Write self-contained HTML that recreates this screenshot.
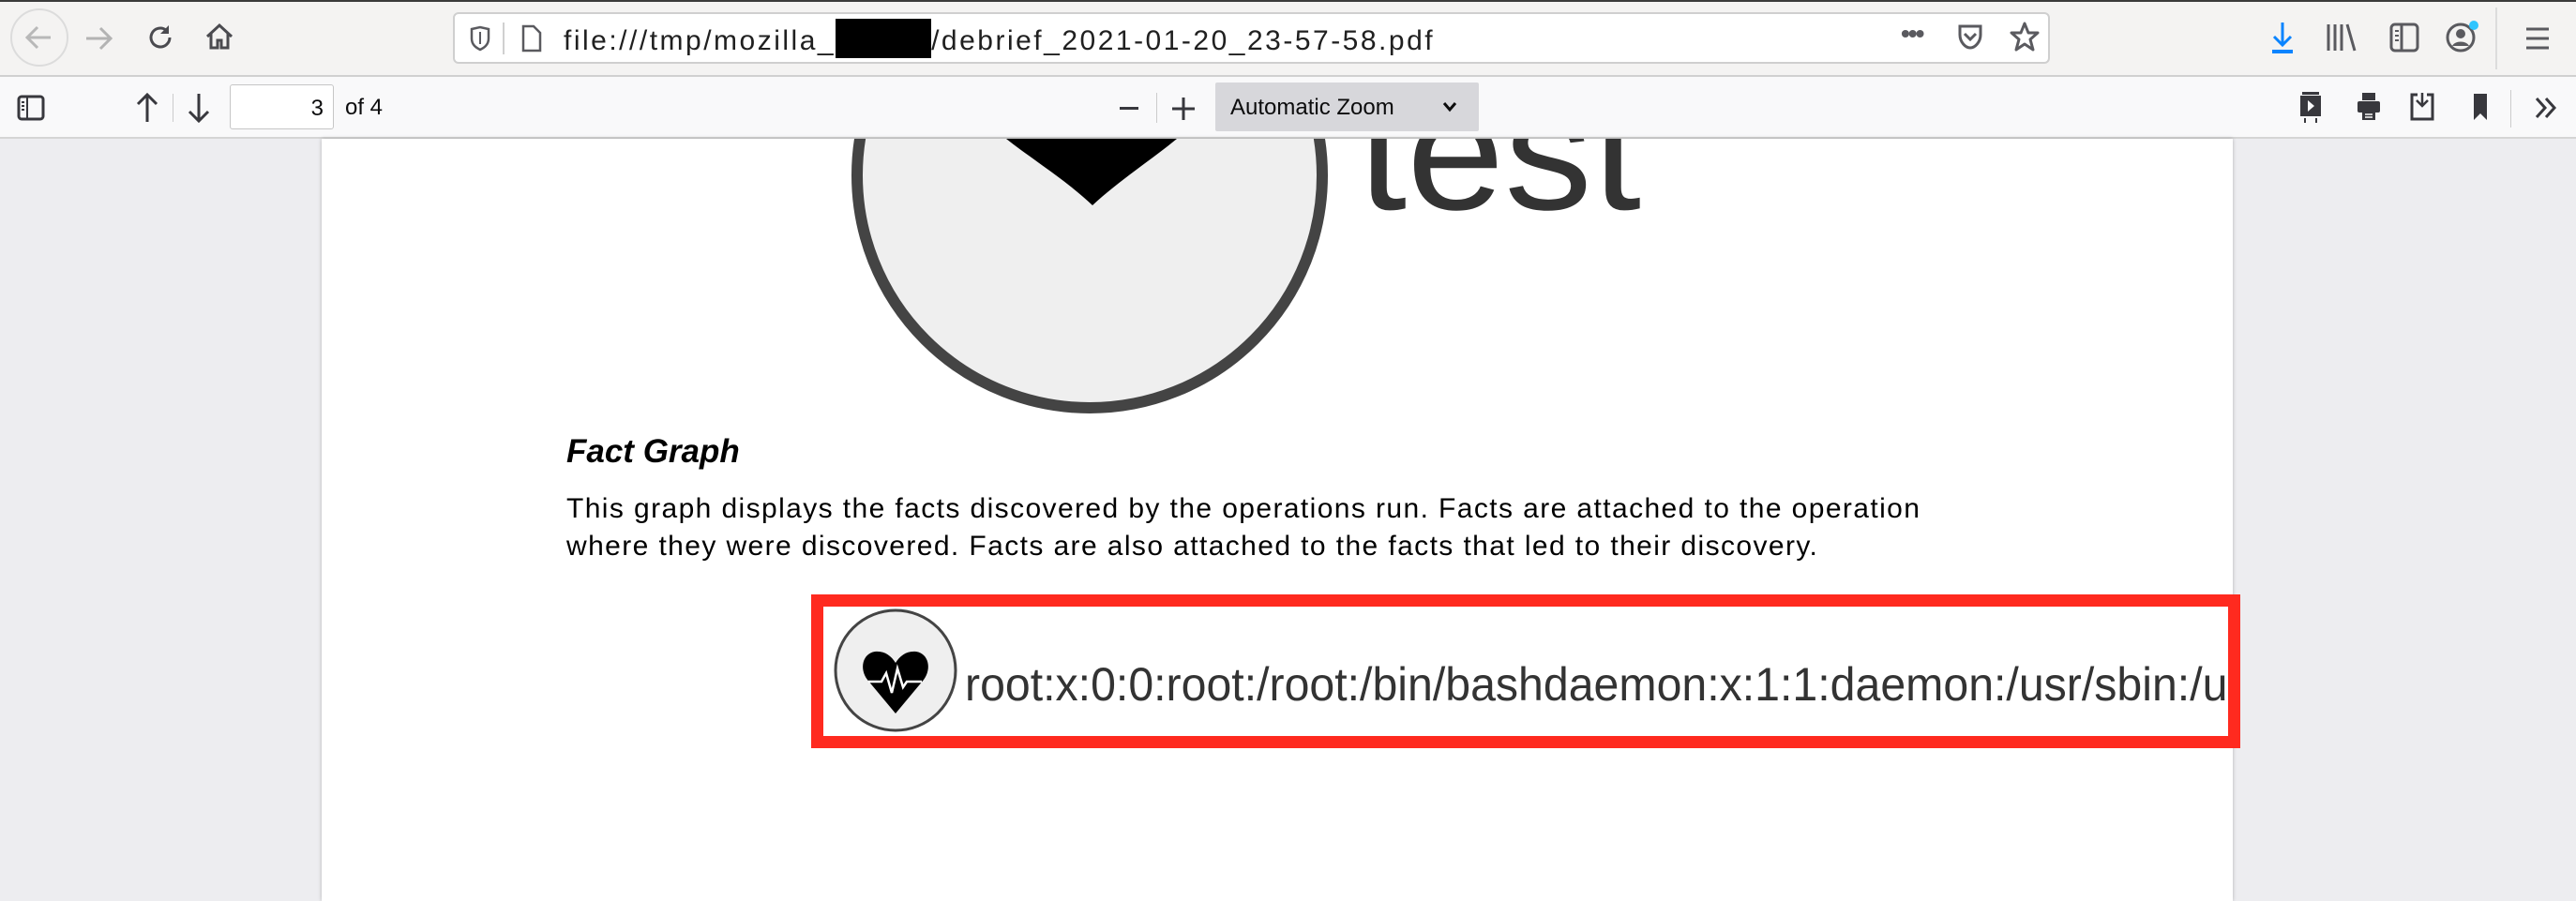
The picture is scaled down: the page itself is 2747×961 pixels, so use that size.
<!DOCTYPE html>
<html><head><meta charset="utf-8"><style>
*{margin:0;padding:0;box-sizing:border-box}
body{width:2747px;height:961px;overflow:hidden;background:#ededf0;font-family:"Liberation Sans",sans-serif;position:relative}
.abs{position:absolute}
#nav{left:0;top:0;width:2747px;height:82px;background:#f4f3f2;border-bottom:2px solid #d0d0d0}
#topline{left:0;top:0;width:2747px;height:2px;background:#3b3b3b}
#url{left:483px;top:13px;width:1703px;height:55px;background:#fff;border:2px solid #cfcfcf;border-radius:6px}
#pdfbar{left:0;top:82px;width:2747px;height:66px;background:#f9f9fa;border-bottom:2px solid #d5d5d5}
#page{left:343px;top:148px;width:2038px;height:813px;background:#fff;box-shadow:0 0 4px rgba(0,0,0,.25);overflow:hidden}
svg{position:absolute;overflow:visible}
</style></head><body>
<div id="nav" class="abs"></div>
<div id="topline" class="abs"></div>
<svg style="left:10px;top:8px" width="64" height="64"><circle cx="32" cy="32" r="30" fill="#f4f3f2" stroke="#dcdcdc" stroke-width="2"/><path d="M44 32H20M30 21L19 32l11 11" stroke="#b8b8b8" stroke-width="3" fill="none"/></svg>
<svg style="left:88px;top:24px" width="34" height="34"><path d="M4 17h26M19 6l11 11-11 11" stroke="#b3b3b3" stroke-width="3" fill="none"/></svg>
<svg style="left:155px;top:24px" width="32" height="32"><path d="M26 16a10 10 0 1 1-4-8" stroke="#4a4a4f" stroke-width="3" fill="none"/><path d="M25 3v9h-9z" fill="#4a4a4f"/></svg>
<svg style="left:217px;top:22px" width="34" height="34"><path d="M4 17L17 5l13 12M8 14v15h7v-8h4v8h7V14" stroke="#4a4a4f" stroke-width="3" fill="none"/></svg>
<div id="url" class="abs"></div>
<svg style="left:501px;top:28px" width="22" height="26"><path d="M2 3l9-2 9 2v10c0 7-5 10-9 12-4-2-9-5-9-12z" stroke="#5a5a5f" stroke-width="2.5" fill="none"/><path d="M11 6v13" stroke="#5a5a5f" stroke-width="2"/></svg>
<div class="abs" style="left:536px;top:24px;width:2px;height:34px;background:#d0d0d0"></div>
<svg style="left:556px;top:26px" width="22" height="30"><path d="M2 2h11l7 7v19H2z" stroke="#5a5a5f" stroke-width="2.5" fill="none"/></svg>
<div class="abs" style="left:601px;top:20px;font-size:30px;letter-spacing:2.5px;color:#202020;white-space:pre">file:///tmp/mozilla_<span style="display:inline-block;width:102px;height:42px;background:#000;vertical-align:-9px"></span>/debrief_2021-01-20_23-57-58.pdf</div>
<div class="abs" style="left:2027px;top:20px;font-size:28px;color:#5a5a5f;font-weight:bold;letter-spacing:-2px">•••</div>
<svg style="left:2087px;top:25px" width="28" height="30"><path d="M3 3h22v9c0 8-6 14-11 14S3 20 3 12z" stroke="#5a5a5f" stroke-width="3" fill="none"/><path d="M8 11l6 6 6-6" stroke="#5a5a5f" stroke-width="3" fill="none"/></svg>
<svg style="left:2143px;top:23px" width="32" height="32"><path d="M16 2l4 10h10l-8 7 3 11-9-6-9 6 3-11-8-7h10z" stroke="#5a5a5f" stroke-width="3" fill="none" stroke-linejoin="round"/></svg>
<svg style="left:2420px;top:22px" width="28" height="36"><path d="M14 2v24M5 17l9 9 9-9" stroke="#0a84ff" stroke-width="3" fill="none"/><rect x="3" y="31" width="22" height="4" fill="#0a84ff"/></svg>
<svg style="left:2480px;top:24px" width="34" height="32"><path d="M3 2v28M10 2v28M17 2v28M23 2l8 28" stroke="#5a5a5f" stroke-width="3" fill="none"/></svg>
<svg style="left:2548px;top:24px" width="32" height="32"><rect x="2" y="2" width="28" height="28" rx="4" stroke="#5a5a5f" stroke-width="3" fill="none"/><path d="M13 2v28" stroke="#5a5a5f" stroke-width="3"/><path d="M6 9h4M6 14h4M6 19h4" stroke="#5a5a5f" stroke-width="2"/></svg>
<svg style="left:2608px;top:22px" width="40" height="36"><circle cx="16" cy="18" r="14" stroke="#5a5a5f" stroke-width="3" fill="none"/><circle cx="16" cy="14" r="5" fill="#5a5a5f"/><path d="M7 27c3-6 15-6 18 0" fill="#5a5a5f"/><circle cx="30" cy="5" r="5" fill="#30c5ff"/></svg>
<div class="abs" style="left:2661px;top:8px;width:2px;height:66px;background:#dcdcdc"></div>
<svg style="left:2692px;top:28px" width="28" height="26"><path d="M2 3h24M2 13h24M2 23h24" stroke="#5a5a5f" stroke-width="3"/></svg>

<div id="pdfbar" class="abs"></div>
<svg style="left:18px;top:101px" width="30" height="28"><rect x="2" y="2" width="26" height="24" rx="3" stroke="#38383d" stroke-width="3" fill="none"/><path d="M11 2v24" stroke="#38383d" stroke-width="2"/><path d="M5 8h3M5 12h3M5 16h3" stroke="#38383d" stroke-width="2"/></svg>
<svg style="left:144px;top:98px" width="26" height="34"><path d="M13 32V3M3 13L13 3l10 10" stroke="#38383d" stroke-width="3" fill="none"/></svg>
<div class="abs" style="left:184px;top:100px;width:1px;height:30px;background:#ccc"></div>
<svg style="left:199px;top:98px" width="26" height="34"><path d="M13 2v29M3 21l10 10 10-10" stroke="#38383d" stroke-width="3" fill="none"/></svg>
<div class="abs" style="left:245px;top:90px;width:111px;height:48px;background:#fff;border:1px solid #c6c6c6;border-radius:3px;font-size:24px;text-align:right;padding:11px 10px 0 0;color:#0c0c0d">3</div>
<div class="abs" style="left:368px;top:101px;font-size:24px;color:#0c0c0d">of 4</div>
<div class="abs" style="left:1194px;top:114px;width:20px;height:3px;background:#38383d"></div>
<div class="abs" style="left:1233px;top:99px;width:1px;height:32px;background:#ccc"></div>
<svg style="left:1250px;top:104px" width="24" height="24"><path d="M12 0v24M0 12h24" stroke="#38383d" stroke-width="3"/></svg>
<div class="abs" style="left:1296px;top:88px;width:281px;height:52px;background:#d7d7db;border-radius:2px"></div>
<div class="abs" style="left:1312px;top:101px;font-size:24px;color:#0c0c0d">Automatic Zoom</div>
<svg style="left:1538px;top:108px" width="16" height="12"><path d="M2 2l6 7 6-7" stroke="#0c0c0d" stroke-width="3" fill="none"/></svg>
<svg style="left:2450px;top:96px" width="28" height="38"><rect x="5" y="2" width="18" height="3" fill="#38383d"/><rect x="3" y="6" width="22" height="22" fill="#38383d"/><path d="M11 11l7 6-7 6z" fill="#f9f9fa"/><path d="M8 30v5M20 30v5" stroke="#38383d" stroke-width="2"/></svg>
<svg style="left:2512px;top:97px" width="28" height="34"><rect x="7" y="2" width="14" height="8" fill="#38383d"/><rect x="2" y="11" width="24" height="12" rx="2" fill="#38383d"/><rect x="7" y="20" width="14" height="11" fill="#38383d"/><path d="M10 25h8M10 28h8" stroke="#f9f9fa" stroke-width="1.5"/></svg>
<svg style="left:2568px;top:97px" width="30" height="34"><path d="M10 4H4v26h22V4h-6" stroke="#38383d" stroke-width="3" fill="none"/><path d="M15 2v14M9 10l6 6 6-6" stroke="#38383d" stroke-width="2.5" fill="none"/></svg>
<svg style="left:2636px;top:98px" width="18" height="32"><path d="M2 2h14v28l-7-7-7 7z" fill="#38383d"/></svg>
<div class="abs" style="left:2677px;top:96px;width:1px;height:40px;background:#ccc"></div>
<svg style="left:2702px;top:103px" width="26" height="24"><path d="M3 2l9 10-9 10M13 2l9 10-9 10" stroke="#38383d" stroke-width="3" fill="none"/></svg>

<div id="page" class="abs">
  <svg style="left:0;top:0" width="2038" height="813">
    <ellipse cx="819" cy="39" rx="248" ry="248" fill="#efefef" stroke="#444" stroke-width="12"/>
    <path d="M730 0 C755 20 795 45 822 71 C850 45 888 20 912 0 Z" fill="#000"/>
    <text x="1105" y="75" font-family="Liberation Sans, sans-serif" font-size="178" fill="#333" textLength="302" lengthAdjust="spacingAndGlyphs">test</text>
  </svg>
  <div class="abs" style="left:261px;top:314px;font-size:35px;font-weight:bold;font-style:italic;color:#000">Fact Graph</div>
  <div class="abs" style="left:261px;top:375px;width:1700px;font-size:30px;letter-spacing:1.4px;line-height:40px;color:#000;white-space:nowrap">This graph displays the facts discovered by the operations run. Facts are attached to the operation<br>where they were discovered. Facts are also attached to the facts that led to their discovery.</div>
</div>
<div class="abs" style="left:865px;top:634px;width:1524px;height:164px;border:13px solid #ff2a1f;background:#fff;overflow:hidden">
  <svg style="left:0;top:0" width="1500" height="140">
    <circle cx="77" cy="68" r="64" fill="#efefef" stroke="#444" stroke-width="3"/>
    <path d="M77 114 L47 78 C38 66 42 50 55 48 C65 47 72 52 77 60 C82 52 89 47 99 48 C112 50 116 66 107 78 Z" fill="#000"/>
    <path d="M48 80h14l5-9 6 21 6-26 6 20 4-6h16" stroke="#fff" stroke-width="2.5" fill="none"/>
  </svg>
  <div class="abs" style="left:151px;top:58px;font-size:50px;color:#333;white-space:nowrap;line-height:1;transform:scaleX(0.965);transform-origin:0 0">root:x:0:0:root:/root:/bin/bashdaemon:x:1:1:daemon:/usr/sbin:/usr/sbin/nologin</div>
</div>
</body></html>
